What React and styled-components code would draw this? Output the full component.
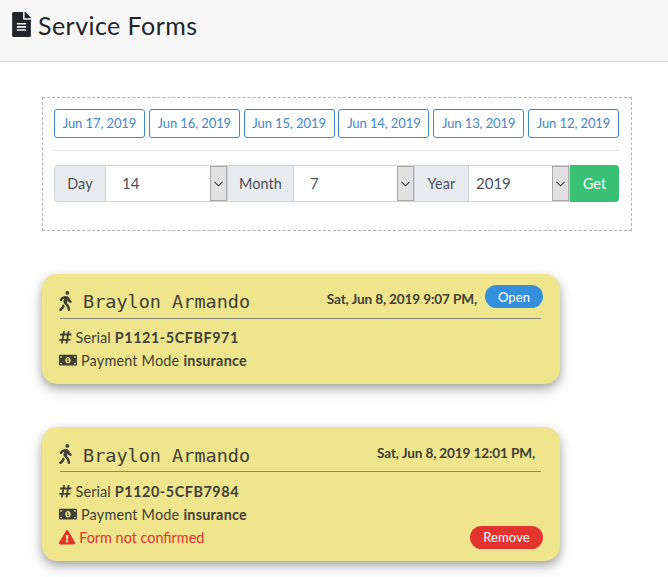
import React from "react";
import styled, { createGlobalStyle } from "styled-components";
import {
  FaFileAlt,
  FaWalking,
  FaHashtag,
  FaMoneyBillAlt,
  FaExclamationTriangle,
} from "react-icons/fa";

const GlobalStyle = createGlobalStyle`
  *, *::before, *::after { box-sizing: border-box; }
  body {
    margin: 0;
    min-height: 100vh;
    background: #fff;
    color: #212529;
    font: 14.4px/23px Lato, "Open Sans", sans-serif;
  }
`;

const Header = styled.header`
  display: flex;
  align-items: flex-start;
  gap: 7px;
  height: 62px;
  padding: 12px;
  background: #f7f7f7;
  border-bottom: 1px solid #dcdcdc;
  svg { flex: none; width: 19px; height: 25px; }
`;

const Title = styled.h1`
  margin: 0;
  font-size: 25px;
  font-weight: 400;
  line-height: 26px;
  letter-spacing: 0.45px;
  white-space: nowrap;
`;

const Main = styled.main`
  padding: 35px 36px 16px 42px;
`;

const Filters = styled.section`
  height: 134px;
  padding: 11px 12px 0 11px;
  border: 1px dashed #b3b3b3;
`;

const DateList = styled.div`
  display: flex;
  justify-content: space-between;
  padding-bottom: 12px;
  border-bottom: 1px solid #dfdfdf;
`;

const DateButton = styled.button`
  width: 91px;
  height: 29px;
  padding: 0;
  border: 1px solid #4088c8;
  border-radius: 3px;
  background: #fff;
  color: #4088c8;
  font: 13px/27px Lato, sans-serif;
  letter-spacing: -0.1px;
  white-space: nowrap;
`;

const InputGroup = styled.div`
  display: flex;
  height: 37px;
  margin-top: 14px;
  line-height: 36px;
  color: #495057;
`;

const Addon = styled.label`
  width: ${(p) => p.$w}px;
  border: 1px solid #ced4da;
  border-left-width: ${(p) => (p.$first ? "1px" : "0")};
  border-radius: ${(p) => (p.$first ? "4px 0 0 4px" : "0")};
  background: #e9ecef;
  text-align: center;
  letter-spacing: 0.1px;
`;

const SelectBox = styled.div`
  display: flex;
  justify-content: space-between;
  width: ${(p) => p.$w}px;
  padding-left: ${(p) => p.$pad}px;
  border: solid #ced4da;
  border-width: 1px 1px 1px 0;
  line-height: 35px;
  font-size: 15px;
`;

const Arrow = styled.span`
  display: flex;
  align-items: center;
  justify-content: center;
  width: 17px;
  border: 1px solid #a9a9a9;
  background: #e1e1e1;
`;

const GetButton = styled.button`
  width: 49px;
  padding: 0;
  border: 0;
  border-radius: 0 4px 4px 0;
  background: #38c172;
  color: #fff;
  font: 14.4px/36px Lato, sans-serif;
`;

const Card = styled.article`
  width: 518px;
  height: ${(p) => p.$h}px;
  margin-top: 43px;
  padding: 0 17px 0 18px;
  border-radius: 15px;
  background: #eee58c;
  color: #424038;
  box-shadow: 0 4px 8px rgba(0, 0, 0, 0.28), 0 6px 18px rgba(0, 0, 0, 0.13);
`;

const CardHead = styled.div`
  display: flex;
  align-items: flex-start;
  height: 45px;
  margin-right: 2px;
  border-bottom: 1px solid #8a8674;
  svg { flex: none; width: 13px; height: 20px; margin: 17px 1px 0 -1px; }
`;

const Name = styled.span`
  flex: 1;
  margin: ${(p) => p.$top}px 0 0 10px;
  font: 18.5px/24px "DejaVu Sans Mono", monospace;
  white-space: nowrap;
`;

const Stamp = styled.strong`
  margin: ${(p) => p.$top}px ${(p) => p.$end}px 0 0;
  font-size: 13.6px;
  letter-spacing: -0.14px;
  white-space: nowrap;
`;

const Pill = styled.button`
  width: ${(p) => p.$w}px;
  height: 23px;
  flex: none;
  padding: 0;
  border: 0;
  border-radius: 12px;
  background: ${(p) => p.$bg};
  color: #fff;
  font: 13px/22px Lato, sans-serif;
  letter-spacing: 0.1px;
`;

const OpenPill = styled(Pill)`
  margin: 11px -2px 0 0;
`;

const Details = styled.div`
  display: flex;
  flex-direction: column;
  padding-top: ${(p) => p.$top}px;
`;

const Line = styled.div`
  display: flex;
  align-items: center;
  height: 23px;
  color: ${(p) => p.$color || "inherit"};
  white-space: nowrap;
  letter-spacing: ${(p) => p.$ls || 0}px;
  svg { flex: none; width: ${(p) => p.$icon}px; height: 14.4px; margin: 0 4px 0 -1px; }
  strong { margin-left: 4px; letter-spacing: ${(p) => p.$strongLs || 0}px; }
  button { margin: -1px 0 0 auto; }
`;

const Select = ({ value, w, pad }) => (
  <SelectBox $w={w} $pad={pad}>
    {value}
    <Arrow>
      <svg width="9" height="6" viewBox="0 0 9 6" fill="none" stroke="#404040" strokeWidth="1.1">
        <path d="M.5 .8 4.5 4.8 8.5 .8" />
      </svg>
    </Arrow>
  </SelectBox>
);

const days = [17, 16, 15, 14, 13, 12];

const FormCard = ({ stamp, serial, unconfirmed }) => (
  <Card $h={unconfirmed ? 134 : 110}>
    <CardHead>
      <FaWalking />
      <Name $top={unconfirmed ? 17 : 16}>Braylon Armando</Name>
      <Stamp $top={unconfirmed ? 15 : 14} $end={unconfirmed ? 6 : 8}>{stamp}</Stamp>
      {!unconfirmed && <OpenPill $w={58} $bg="#3490dc">Open</OpenPill>}
    </CardHead>
    <Details $top={unconfirmed ? 8 : 7}>
      <Line $icon={12.6} $ls={0.1} $strongLs={0.55}>
        <FaHashtag />Serial<strong>{serial}</strong>
      </Line>
      <Line $icon={18} $ls={0.2} $strongLs={0.25}>
        <FaMoneyBillAlt />Payment Mode<strong>insurance</strong>
      </Line>
      {unconfirmed && (
        <Line $icon={16.2} $color="#e3342f">
          <FaExclamationTriangle />Form not confirmed
          <Pill $w={73} $bg="#e3342f">Remove</Pill>
        </Line>
      )}
    </Details>
  </Card>
);

export default function App() {
  return (
    <>
      <GlobalStyle />
      <Header>
        <FaFileAlt />
        <Title>Service Forms</Title>
      </Header>
      <Main>
        <Filters>
          <DateList>
            {days.map((d) => (
              <DateButton key={d}>Jun {d}, 2019</DateButton>
            ))}
          </DateList>
          <InputGroup>
            <Addon $w={52} $first>Day</Addon>
            <Select value="14" w={122} pad={16} />
            <Addon $w={66}>Month</Addon>
            <Select value="7" w={121} pad={16} />
            <Addon $w={54}>Year</Addon>
            <Select value="2019" w={101} pad={7} />
            <GetButton>Get</GetButton>
          </InputGroup>
        </Filters>
        <FormCard stamp="Sat, Jun 8, 2019 9:07 PM," serial="P1121-5CFBF971" />
        <FormCard stamp="Sat, Jun 8, 2019 12:01 PM," serial="P1120-5CFB7984" unconfirmed />
      </Main>
    </>
  );
}
